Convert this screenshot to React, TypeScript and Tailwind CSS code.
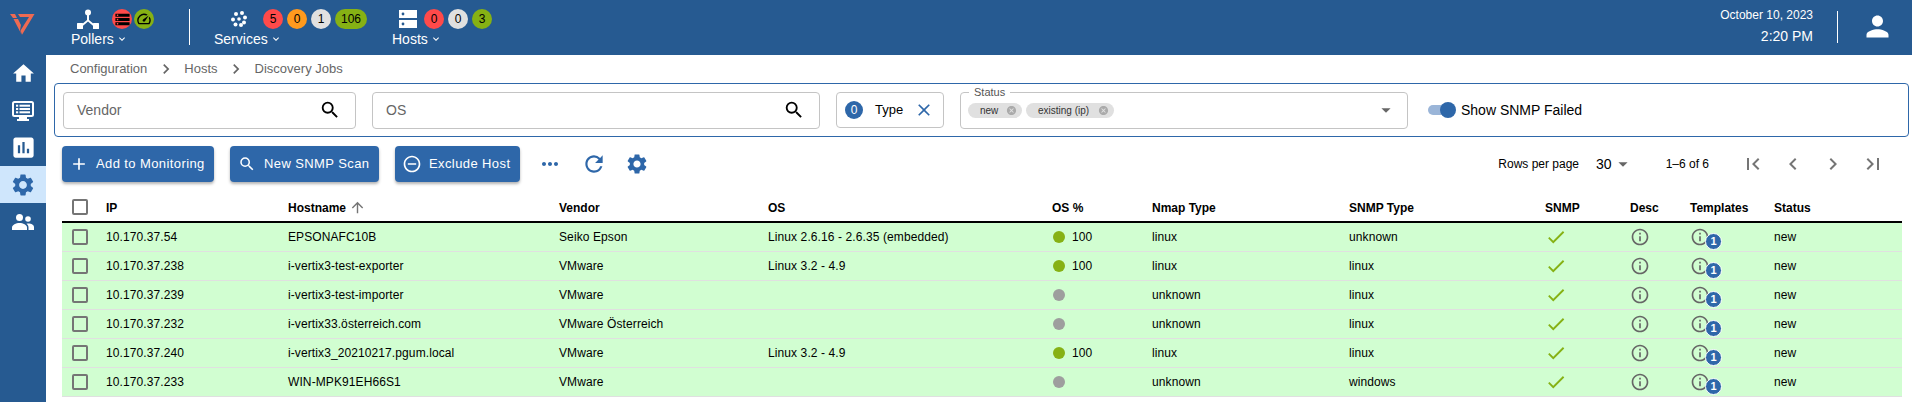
import type { ReactNode } from 'react'
import {
  MdAdd,
  MdArrowDropDown,
  MdArrowUpward,
  MdAssessment,
  MdCancel,
  MdCheck,
  MdChevronLeft,
  MdChevronRight,
  MdClose,
  MdFirstPage,
  MdHome,
  MdInfoOutline,
  MdKeyboardArrowDown,
  MdLastPage,
  MdMoreHoriz,
  MdNavigateNext,
  MdPerson,
  MdRefresh,
  MdRemoveCircleOutline,
  MdSearch,
  MdSettings,
  MdSpeed,
  MdStorage
} from 'react-icons/md'

interface Row {
  ip: string
  hostname: string
  vendor: string
  os: string
  osPercent: string
  nmap: string
  snmpType: string
}

const rows: Row[] = [
  { ip: '10.170.37.54', hostname: 'EPSONAFC10B', vendor: 'Seiko Epson', os: 'Linux 2.6.16 - 2.6.35 (embedded)', osPercent: '100', nmap: 'linux', snmpType: 'unknown' },
  { ip: '10.170.37.238', hostname: 'i-vertix3-test-exporter', vendor: 'VMware', os: 'Linux 3.2 - 4.9', osPercent: '100', nmap: 'linux', snmpType: 'linux' },
  { ip: '10.170.37.239', hostname: 'i-vertix3-test-importer', vendor: 'VMware', os: '', osPercent: '', nmap: 'unknown', snmpType: 'linux' },
  { ip: '10.170.37.232', hostname: 'i-vertix33.österreich.com', vendor: 'VMware Österreich', os: '', osPercent: '', nmap: 'unknown', snmpType: 'linux' },
  { ip: '10.170.37.240', hostname: 'i-vertix3_20210217.pgum.local', vendor: 'VMware', os: 'Linux 3.2 - 4.9', osPercent: '100', nmap: 'linux', snmpType: 'linux' },
  { ip: '10.170.37.233', hostname: 'WIN-MPK91EH66S1', vendor: 'VMware', os: '', osPercent: '', nmap: 'unknown', snmpType: 'windows' }
]

const columns = ['IP', 'Hostname', 'Vendor', 'OS', 'OS %', 'Nmap Type', 'SNMP Type', 'SNMP', 'Desc', 'Templates', 'Status']

function Logo() {
  return (
    <svg width="25" height="21" viewBox="0 0 25 21" className="mt-[14px] ml-[10px]">
      <path d="M0 0H5L7 4H3Z" fill="#ee6a52" />
      <path d="M3.500 5H8L11 11L10 16.500L11.700 20.700Z" fill="#ee6a52" />
      <path d="M8 0H24.500L12 20.700L10.500 16.500L19 3H10Z" fill="#ee6a52" />
    </svg>
  )
}

function PollerIcon() {
  return (
    <svg width="22" height="20" viewBox="0 0 22 20" fill="white">
      <circle cx="11" cy="3.500" r="3" />
      <path d="M10 6h2v5l6 5-1.200 1.400L11 12.600l-5.800 4.800L4 16l6-5z" />
      <rect x="0" y="14" width="6" height="6" rx="0.500" />
      <rect x="16" y="14" width="6" height="6" rx="0.500" />
    </svg>
  )
}

function ServicesIcon() {
  return (
    <svg width="16" height="16" viewBox="0 0 16 16" fill="white">
      <circle cx="2" cy="8.500" r="2" />
      <circle cx="5" cy="3" r="2" />
      <circle cx="11" cy="2" r="2" />
      <circle cx="14" cy="6.500" r="2" />
      <circle cx="8" cy="8" r="1.800" />
      <circle cx="13" cy="11.500" r="2" />
      <circle cx="4.500" cy="13.500" r="2" />
      <circle cx="10" cy="14" r="2" />
    </svg>
  )
}

function HostsIcon() {
  return (
    <svg width="18" height="18" viewBox="0 0 18 18">
      <rect x="0" y="0" width="18" height="8" fill="white" />
      <rect x="0" y="10" width="18" height="8" fill="white" />
      <circle cx="4" cy="4" r="1.400" fill="#265a91" />
      <circle cx="4" cy="14" r="1.400" fill="#265a91" />
    </svg>
  )
}

function MonitorIcon() {
  return (
    <svg width="24" height="24" viewBox="0 0 24 24" fill="white">
      <path
        fillRule="evenodd"
        d="M3.500 2h17A2.500 2.500 0 0 1 23 4.500v11a2.500 2.500 0 0 1-2.500 2.500H16v2h2v2H6v-2h2v-2H3.500A2.500 2.500 0 0 1 1 15.500v-11A2.500 2.500 0 0 1 3.500 2zM3.500 4a.5.5 0 0 0-.5.5v11a.5.5 0 0 0 .5.5h17a.5.5 0 0 0 .5-.5v-11a.5.5 0 0 0-.5-.5z"
      />
      <rect x="5" y="5.700" width="2.200" height="2" />
      <rect x="8.500" y="5.700" width="10.500" height="2" />
      <rect x="5" y="9" width="2.200" height="2" />
      <rect x="8.500" y="9" width="10.500" height="2" />
      <rect x="5" y="12.300" width="2.200" height="2" />
      <rect x="8.500" y="12.300" width="10.500" height="2" />
    </svg>
  )
}

function UsersIcon() {
  return (
    <svg width="24" height="24" viewBox="0 0 24 24" fill="white">
      <circle cx="8.500" cy="7.500" r="3.500" />
      <circle cx="17" cy="9" r="2.800" />
      <path d="M1 20v-2.500C1 14.800 5 13 8.500 13s7.500 1.800 7.500 4.500V20z" />
      <path d="M17.500 20v-2.500c0-1.600-.8-2.800-2-3.700.7-.2 1.300-.3 2-.3 2.900 0 5.500 1.300 5.500 3.500V20z" />
    </svg>
  )
}

function Count({ children, className }: { children: ReactNode; className: string }) {
  return (
    <span className={`flex h-5 min-w-5 items-center justify-center rounded-full text-xs text-black ${className}`}>
      {children}
    </span>
  )
}

function NavGroup({ label, left, gap, children }: { label: string; left: string; gap: string; children: ReactNode }) {
  return (
    <div className="flex flex-col pt-[9px]">
      <div className={`flex h-5 items-center ${left} ${gap}`}>{children}</div>
      <div className="mt-[2px] flex h-[16px] items-center text-sm leading-4 text-white">
        {label}
        <MdKeyboardArrowDown className="ml-[2px] text-[12px]" />
      </div>
    </div>
  )
}

function Header() {
  return (
    <header className="flex h-[55px] shrink-0 items-start bg-[#265a91]">
      <div className="w-[71px]">
        <Logo />
      </div>
      <NavGroup label="Pollers" left="pl-[6px]" gap="gap-[2px]">
        <div className="mr-[11px]">
          <PollerIcon />
        </div>
        <Count className="bg-[#ff4a4a]">
          <MdStorage className="text-[17px]" />
        </Count>
        <Count className="bg-[#86b114]">
          <MdSpeed className="text-[16px]" />
        </Count>
      </NavGroup>
      <div className="mt-[9px] ml-[35px] h-9 w-px bg-white" />
      <div className="ml-[24px]">
        <NavGroup label="Services" left="pl-[17px]" gap="gap-1">
          <div className="mr-3">
            <ServicesIcon />
          </div>
          <Count className="bg-[#ff4a4a]">5</Count>
          <Count className="bg-[#ff9a1e]">0</Count>
          <Count className="bg-[#e0e0e0]">1</Count>
          <Count className="w-8 bg-[#86b114]">106</Count>
        </NavGroup>
      </div>
      <div className="ml-[25px]">
        <NavGroup label="Hosts" left="pl-[7px]" gap="gap-1">
          <div className="mr-[3px]">
            <HostsIcon />
          </div>
          <Count className="bg-[#ff4a4a]">0</Count>
          <Count className="bg-[#e0e0e0]">0</Count>
          <Count className="bg-[#86b114]">3</Count>
        </NavGroup>
      </div>
      <div className="ml-auto flex flex-col items-end pt-[7px] text-white">
        <span className="text-xs leading-4">October 10, 2023</span>
        <span className="mt-[3px] text-sm leading-5">2:20 PM</span>
      </div>
      <div className="mt-[11px] ml-[24px] h-8 w-px bg-white" />
      <div className="mt-[10px] ml-[23px] w-[33px]">
        <MdPerson className="text-[33px] text-white" />
      </div>
      <div className="w-[18px]" />
    </header>
  )
}

function Sidebar() {
  return (
    <aside className="flex w-[46px] shrink-0 flex-col items-center bg-[#265a91] text-white">
      <div className="flex h-[37px] w-full items-center justify-center">
        <MdHome className="text-[25px]" />
      </div>
      <div className="flex h-[37px] w-full items-center justify-center">
        <MonitorIcon />
      </div>
      <div className="flex h-[37px] w-full items-center justify-center">
        <MdAssessment className="text-[27px]" />
      </div>
      <div className="flex h-[37px] w-full items-center justify-center bg-[#cfe6fc] text-[#2e67a9]">
        <MdSettings className="text-[26px]" />
      </div>
      <div className="flex h-[37px] w-full items-center justify-center">
        <UsersIcon />
      </div>
    </aside>
  )
}

function Breadcrumb() {
  return (
    <nav className="flex h-[28px] shrink-0 items-center pl-[24px] text-[13px] text-[#666]">
      <span>Configuration</span>
      <MdNavigateNext className="mx-[8.5px] text-[20px]" />
      <span>Hosts</span>
      <MdNavigateNext className="mx-[8.5px] text-[20px]" />
      <span>Discovery Jobs</span>
    </nav>
  )
}

function SearchInput({ label, className }: { label: string; className: string }) {
  return (
    <div className={`flex h-[37px] items-center justify-between rounded border border-[#c4c4c4] pr-[14px] pl-[13px] text-sm text-[#666] ${className}`}>
      <span>{label}</span>
      <MdSearch className="text-[22px] text-black" />
    </div>
  )
}

function Chip({ label, className }: { label: string; className: string }) {
  return (
    <span className={`flex h-[15px] items-center justify-between rounded-full bg-[#e0e0e0] pr-[5px] pl-[12px] text-[10px] text-[#333] ${className}`}>
      {label}
      <MdCancel className="text-[11px] text-[#aaa]" />
    </span>
  )
}

function FilterPanel() {
  return (
    <section className="mr-[3px] ml-[8px] flex h-[54px] shrink-0 items-center gap-[16px] rounded border border-[#2e67a9] pl-[8px]">
      <SearchInput label="Vendor" className="w-[293px]" />
      <SearchInput label="OS" className="w-[448px]" />
      <div className="flex h-[36px] w-[108px] items-center rounded border border-[#c4c4c4] pl-[8px]">
        <span className="flex h-[18px] w-[18px] items-center justify-center rounded-full bg-[#2e67a9] text-xs text-white">0</span>
        <span className="ml-[12px] text-[13px] text-black">Type</span>
        <MdClose className="ml-[11px] text-[20px] text-[#2e67a9]" />
      </div>
      <div className="relative flex h-[37px] w-[448px] items-center justify-between rounded border border-[#c4c4c4] pr-[10px] pl-[7px]">
        <span className="absolute -top-[8px] left-[8px] bg-white px-[5px] text-[11px] leading-[14px] text-[#555]">Status</span>
        <div className="flex gap-[4px]">
          <Chip label="new" className="w-[54px]" />
          <Chip label="existing (ip)" className="w-[88px]" />
        </div>
        <MdArrowDropDown className="text-[22px] text-[#666]" />
      </div>
      <div className="ml-[4px] flex items-center">
        <div className="relative h-[10px] w-[22px] rounded-full bg-[#9ab5d8]">
          <span className="absolute -top-[3px] left-[12px] h-[16px] w-[16px] rounded-full bg-[#2e67a9]" />
        </div>
        <span className="ml-[11px] text-sm text-black">Show SNMP Failed</span>
      </div>
    </section>
  )
}

function ActionButton({ icon, label, className }: { icon: ReactNode; label: string; className: string }) {
  return (
    <button className={`flex h-[36px] items-center rounded bg-[#2e67a9] pl-[7px] text-[13px] tracking-[0.4px] text-white shadow-[0_2px_3px_rgba(0,0,0,0.3)] ${className}`}>
      {icon}
      <span className="ml-[7px]">{label}</span>
    </button>
  )
}

function Toolbar() {
  return (
    <div className="mt-[9px] ml-[16px] flex h-[36px] shrink-0 items-center pr-[27px]">
      <ActionButton icon={<MdAdd className="text-[20px]" />} label="Add to Monitoring" className="w-[152px]" />
      <ActionButton icon={<MdSearch className="h-5 w-5 p-[1px]" />} label="New SNMP Scan" className="ml-[16px] w-[149px]" />
      <ActionButton icon={<MdRemoveCircleOutline className="text-[20px]" />} label="Exclude Host" className="ml-[16px] w-[125px]" />
      <MdMoreHoriz className="ml-[18px] text-[24px] text-[#2e67a9]" />
      <MdRefresh className="ml-[19px] text-[26px] text-[#2e67a9]" />
      <MdSettings className="ml-[18px] text-[24px] text-[#2e67a9]" />
      <div className="ml-auto flex items-center text-xs text-black">
        <span>Rows per page</span>
        <span className="ml-[17px] text-sm">30</span>
        <MdArrowDropDown className="text-[22px] text-[#666]" />
        <span className="ml-[32px]">1–6 of 6</span>
        <div className="ml-[32px] flex items-center gap-[16px] text-[#757575]">
          <MdFirstPage className="text-[24px]" />
          <MdChevronLeft className="text-[24px]" />
          <MdChevronRight className="text-[24px]" />
          <MdLastPage className="text-[24px]" />
        </div>
      </div>
    </div>
  )
}

function Checkbox() {
  return <span className="ml-[10px] block h-[16px] w-[16px] rounded-[2px] border-2 border-[#757575]" />
}

function DataTable() {
  return (
    <table className="mt-[10px] ml-[16px] w-[1840px] table-fixed border-collapse text-xs text-black">
      <colgroup>
        <col className="w-[44px]" />
        <col className="w-[182px]" />
        <col className="w-[271px]" />
        <col className="w-[209px]" />
        <col className="w-[284px]" />
        <col className="w-[100px]" />
        <col className="w-[197px]" />
        <col className="w-[196px]" />
        <col className="w-[85px]" />
        <col className="w-[60px]" />
        <col className="w-[84px]" />
        <col className="w-[128px]" />
      </colgroup>
      <thead>
        <tr className="h-[30px] border-b-2 border-black">
          <th className="p-0">
            <Checkbox />
          </th>
          {columns.map((column) => (
            <th key={column} className="p-0 pt-[2px] text-left font-bold">
              <span className="flex items-center">
                {column}
                {column === 'Hostname' ? <MdArrowUpward className="ml-[3px] text-[17px] text-[#757575]" /> : null}
              </span>
            </th>
          ))}
        </tr>
      </thead>
      <tbody className="tracking-[0.1px]">
        {rows.map((row) => (
          <tr key={row.ip} className="h-[29px] border-b border-[#e0e0e0] bg-[#d1fed1]">
            <td className="p-0">
              <Checkbox />
            </td>
            <td className="p-0">{row.ip}</td>
            <td className="p-0">{row.hostname}</td>
            <td className="p-0">{row.vendor}</td>
            <td className="p-0">{row.os}</td>
            <td className="p-0">
              <span className="ml-[1px] flex items-center">
                <span className={`h-[12px] w-[12px] rounded-full ${row.osPercent ? 'bg-[#86b114]' : 'bg-[#9e9e9e]'}`} />
                <span className="ml-[7px]">{row.osPercent}</span>
              </span>
            </td>
            <td className="p-0">{row.nmap}</td>
            <td className="p-0">{row.snmpType}</td>
            <td className="p-0">
              <MdCheck className="text-[22px] text-[#86b114]" />
            </td>
            <td className="p-0">
              <MdInfoOutline className="text-[20px] text-[#666]" />
            </td>
            <td className="p-0">
              <span className="relative block h-[20px] w-[20px]">
                <MdInfoOutline className="text-[20px] text-[#666]" />
                <span className="absolute top-[6px] left-[15px] flex h-[17px] w-[17px] items-center justify-center rounded-full border border-white bg-[#2e67a9] text-[11px] font-bold text-white">
                  1
                </span>
              </span>
            </td>
            <td className="p-0">new</td>
            <td className="p-0" />
          </tr>
        ))}
      </tbody>
    </table>
  )
}

export default function App() {
  return (
    <div className="flex h-[402px] w-[1912px] flex-col overflow-hidden bg-white font-['Liberation_Sans',Arial,sans-serif]">
      <Header />
      <div className="flex min-h-0 flex-1">
        <Sidebar />
        <main className="flex min-w-0 flex-1 flex-col">
          <Breadcrumb />
          <FilterPanel />
          <Toolbar />
          <DataTable />
        </main>
      </div>
    </div>
  )
}
